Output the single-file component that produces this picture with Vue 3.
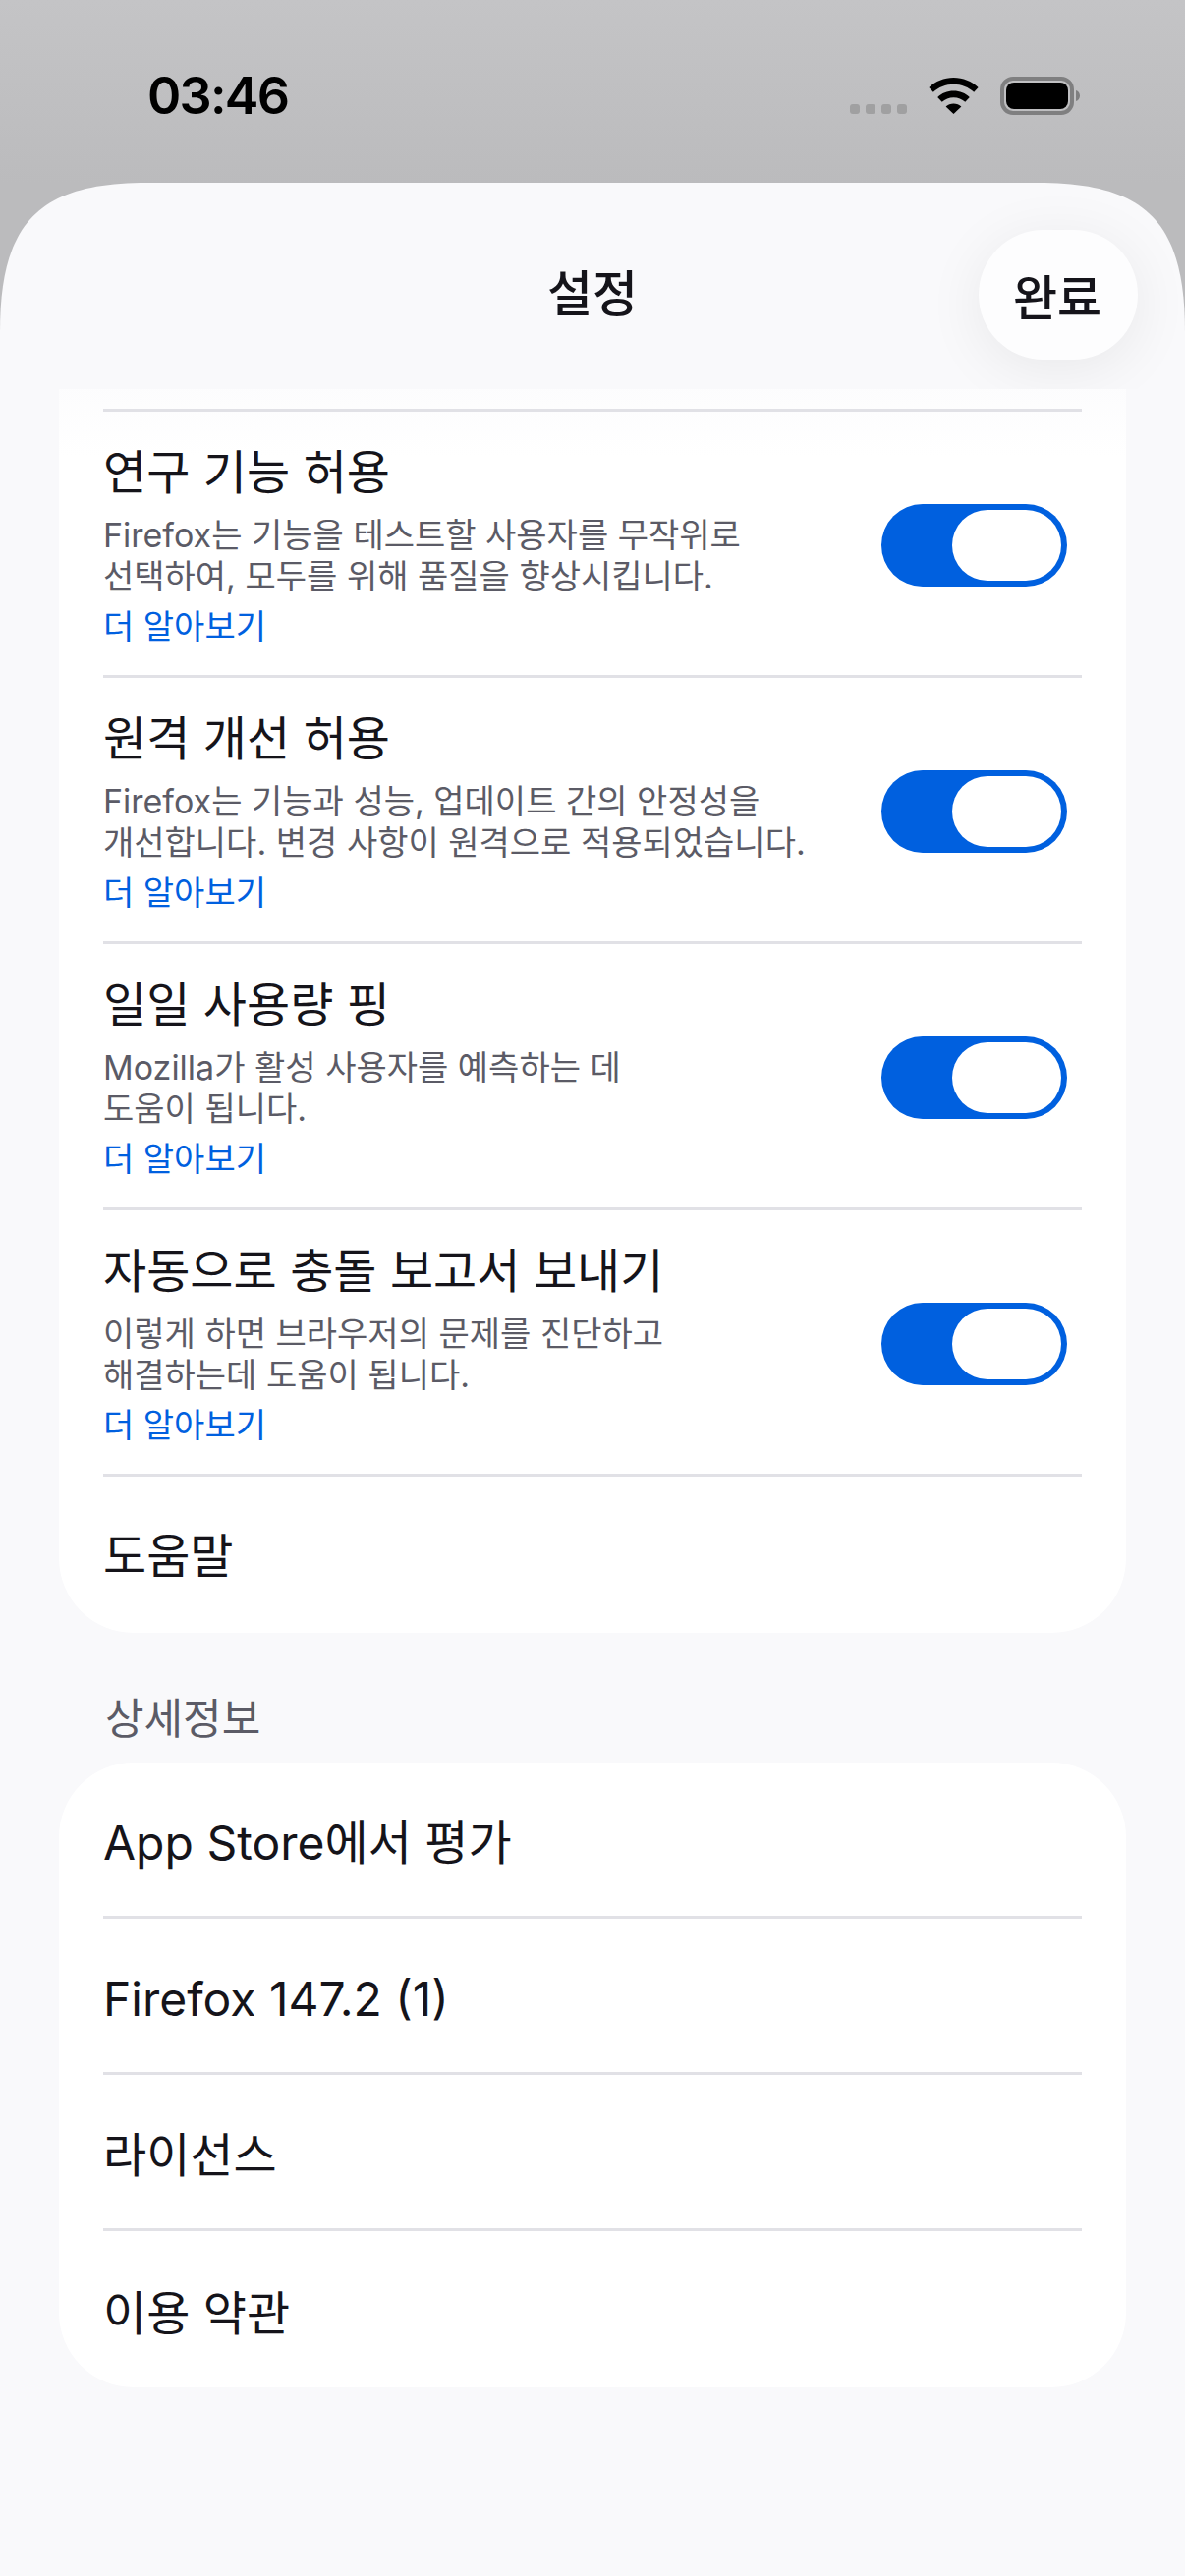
<template>
  <div class="screen">
    <div class="status">
      <span class="time">03:46</span>
      <div class="status-icons">
        <div class="dots"><i></i><i></i><i></i><i></i></div>
        <svg class="wifi" width="51" height="37" viewBox="0 0 51 37">
          <path d="M25.5 0C15.8 0 7 3.8.4 10l4.4 4.8C10.200 9.800 17.500 6.700 25.500 6.700s15.300 3.100 20.700 8.100l4.400-4.800C44 3.800 35.200 0 25.500 0z" />
          <path d="M25.500 13.500c-6.300 0-12 2.400-16.300 6.400l4.500 4.900c3.100-2.900 7.300-4.600 11.800-4.600s8.700 1.700 11.800 4.600l4.500-4.900c-4.300-4-10-6.400-16.300-6.400z" />
          <path d="M25.500 26.500c-3 0-5.800 1.100-7.900 3l7.900 7.500 7.900-7.500c-2.100-1.900-4.900-3-7.900-3z" />
        </svg>
        <svg class="battery" width="82" height="39" viewBox="0 0 82 39">
          <rect x="2" y="2" width="71" height="35" rx="11" fill="none" stroke="#7f7f80" stroke-width="4" />
          <rect x="6" y="6" width="63" height="27" rx="8" fill="#000" />
          <path d="M77 14c2.500.8 4 3 4 5.500S79.500 24.200 77 25z" fill="#7f7f80" />
        </svg>
      </div>
    </div>

    <div class="sheet">
      <header class="nav">
        <h1 class="nav-title">설정</h1>
        <button class="done">완료</button>
      </header>

      <div class="content">
        <section class="card">
          <div v-for="row in toggleRows" :key="row.title" class="row row-toggle">
            <div class="row-text">
              <div class="row-title">{{ row.title }}</div>
              <div class="row-desc">
                <div v-for="line in row.lines" :key="line">{{ line }}</div>
              </div>
              <a class="row-link">더 알아보기</a>
            </div>
            <div class="toggle"><span class="knob"></span></div>
          </div>
          <div class="row row-plain row-help"><span class="row-title">도움말</span></div>
        </section>

        <h2 class="section-label">상세정보</h2>

        <section class="card card-about">
          <div v-for="item in aboutRows" :key="item" class="row row-plain">
            <span class="row-title">{{ item }}</span>
          </div>
        </section>
      </div>
    </div>
  </div>
</template>

<script setup>
const toggleRows = [
  {
    title: '연구 기능 허용',
    lines: ['Firefox는 기능을 테스트할 사용자를 무작위로', '선택하여, 모두를 위해 품질을 향상시킵니다.']
  },
  {
    title: '원격 개선 허용',
    lines: ['Firefox는 기능과 성능, 업데이트 간의 안정성을', '개선합니다. 변경 사항이 원격으로 적용되었습니다.']
  },
  {
    title: '일일 사용량 핑',
    lines: ['Mozilla가 활성 사용자를 예측하는 데', '도움이 됩니다.']
  },
  {
    title: '자동으로 충돌 보고서 보내기',
    lines: ['이렇게 하면 브라우저의 문제를 진단하고', '해결하는데 도움이 됩니다.']
  }
]

const aboutRows = ['App Store에서 평가', 'Firefox 147.2 (1)', '라이선스', '이용 약관']
</script>

<style>
html, body {
  margin: 0;
  background: #f9f9fb;
}
</style>

<style scoped>
.screen {
  width: 1206px;
  height: 2622px;
  overflow: hidden;
  display: flex;
  flex-direction: column;
  background: linear-gradient(#c4c4c6, #bbbbbd 186px);
  font-family: Inter, "Noto Sans CJK KR", sans-serif;
  color: #15141a;
}

.status {
  height: 186px;
  flex: none;
  display: flex;
  justify-content: space-between;
  padding: 0 106px 0 150px;
  box-sizing: border-box;
}
.time {
  margin-top: 66px;
  font-size: 52px;
  line-height: 64px;
  font-weight: 600;
  letter-spacing: -1.7px;
  color: #000;
}
.status-icons {
  display: flex;
  align-items: flex-start;
  padding-top: 78px;
}
.dots {
  display: flex;
  gap: 6px;
  margin-top: 28px;
  margin-right: 22px;
}
.dots i {
  width: 10px;
  height: 10px;
  border-radius: 3px;
  background: #a0a0a1;
}
.wifi {
  margin-top: 1px;
  margin-right: 22px;
}

.sheet {
  flex: 1;
  min-height: 0;
  display: flex;
  flex-direction: column;
  background: #f9f9fb;
  clip-path: path("M0 152C0 40 40 0 150 0H1056C1166 0 1206 40 1206 152V2436H0Z");
}
.nav {
  height: 210px;
  flex: none;
  position: relative;
  overflow: hidden;
  display: flex;
  align-items: center;
  justify-content: center;
}
.nav-title {
  margin: 8px 0 0;
  font-size: 50px;
  font-weight: 500;
}
.done {
  position: absolute;
  left: 996px;
  top: 48px;
  width: 162px;
  height: 132px;
  padding: 0 2px 2px 0;
  border: 0;
  border-radius: 66px;
  background: #fdfdfe;
  box-shadow: 0 10px 60px rgba(0, 0, 0, 0.07);
  font: 500 49px Inter, "Noto Sans CJK KR", sans-serif;
  color: #15141a;
}

.content {
  flex: 1;
  position: relative;
  padding: 0 60px;
  min-height: 0;
}
.content::before {
  content: "";
  position: absolute;
  left: 0;
  right: 0;
  top: 0;
  height: 70px;
  background: linear-gradient(rgba(249, 249, 251, 0.45), rgba(249, 249, 251, 0));
}
.card {
  background: #fff;
  padding: 20px 45px 0;
  border-radius: 0 0 76px 76px;
}
.card-about {
  border-radius: 76px;
  padding-top: 0;
}
.row {
  border-top: 3px solid #e1e1e6;
  box-sizing: border-box;
  position: relative;
}
.card-about .row {
  padding-top: 8px;
}
.card-about .row:first-child {
  border-top: 0;
  height: 156px;
}
.card-about .row:last-child {
  height: 162px;
}
.row-toggle {
  height: 271px;
  display: flex;
  align-items: center;
  justify-content: space-between;
  padding-right: 15px;
}
.row-plain {
  height: 159px;
  display: flex;
  align-items: center;
}
.row-help {
  height: 162px;
  padding-top: 2px;
}
.row-text {
  padding-top: 4px;
}
.row-title {
  font-size: 48px;
  line-height: 60px;
}
.row-desc {
  margin-top: 13px;
  font-size: 34px;
  line-height: 42px;
  color: #5b5b66;
}
.row-link {
  display: block;
  margin-top: 8px;
  font-size: 34px;
  line-height: 44px;
  color: #0060df;
}
.toggle {
  width: 189px;
  height: 84px;
  flex: none;
  margin-top: 3px;
  display: flex;
  align-items: center;
  justify-content: flex-end;
  padding-right: 6px;
  box-sizing: border-box;
  border-radius: 42px;
  background: #0060df;
}
.knob {
  width: 111px;
  height: 72px;
  border-radius: 36px;
  background: #fff;
}

.section-label {
  margin: 0;
  height: 132px;
  padding: 65px 0 0 47px;
  box-sizing: border-box;
  font-size: 43px;
  line-height: 44px;
  font-weight: 400;
  color: #5b5b66;
}
</style>
